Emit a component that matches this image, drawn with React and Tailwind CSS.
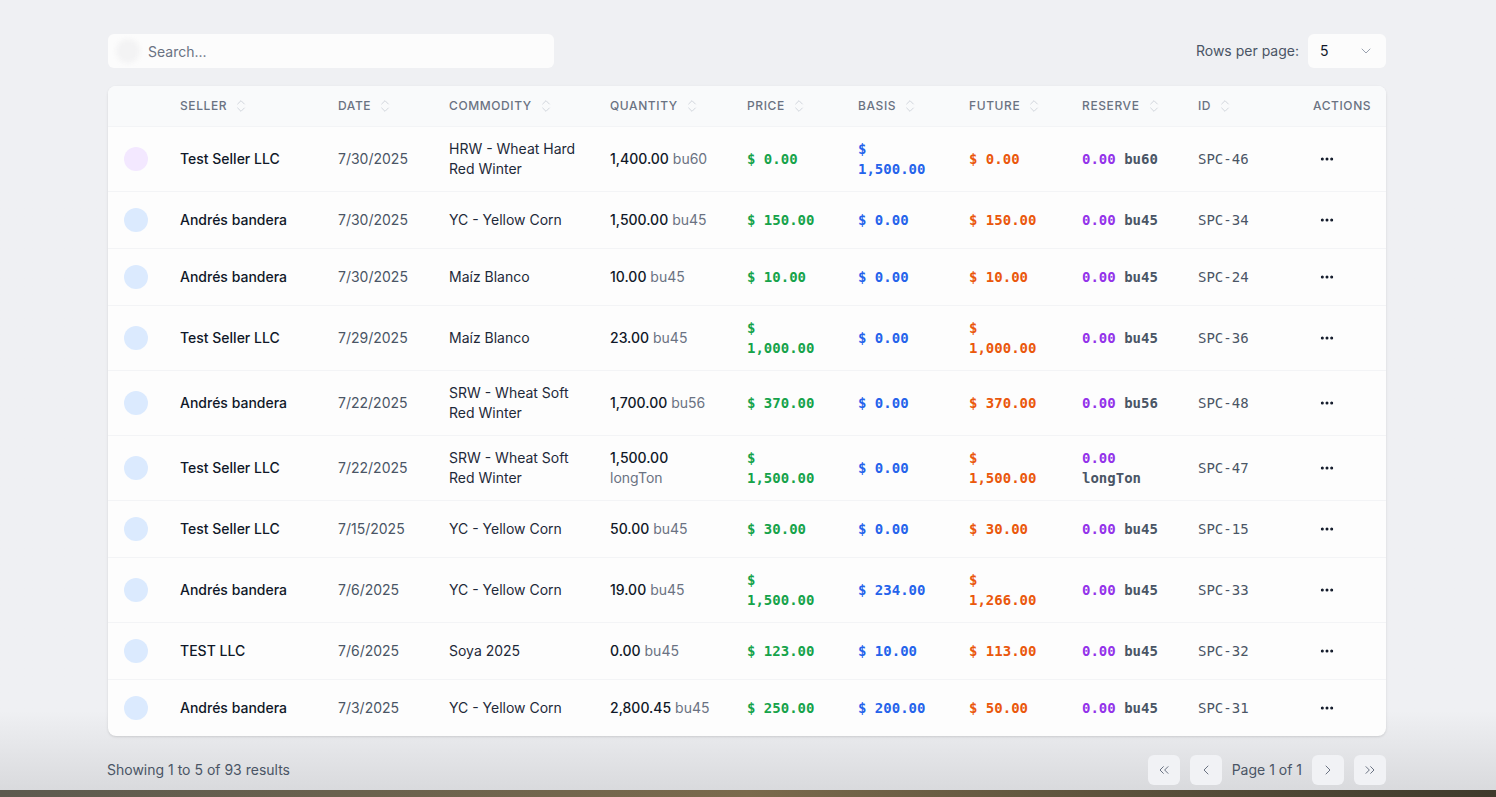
import React from 'react';
import { ChevronDown, ChevronsUpDown, ChevronLeft, ChevronRight, ChevronsLeft, ChevronsRight, MoreHorizontal } from 'lucide-react';

const rows = [
  { seller: 'Test Seller LLC', date: '7/30/2025', commodity: 'HRW - Wheat Hard Red Winter', qty: '1,400.00', unit: 'bu60', price: '0.00', basis: '1,500.00', future: '0.00', reserve: '0.00', id: 'SPC-46', purple: true },
  { seller: 'Andrés bandera', date: '7/30/2025', commodity: 'YC - Yellow Corn', qty: '1,500.00', unit: 'bu45', price: '150.00', basis: '0.00', future: '150.00', reserve: '0.00', id: 'SPC-34' },
  { seller: 'Andrés bandera', date: '7/30/2025', commodity: 'Maíz Blanco', qty: '10.00', unit: 'bu45', price: '10.00', basis: '0.00', future: '10.00', reserve: '0.00', id: 'SPC-24' },
  { seller: 'Test Seller LLC', date: '7/29/2025', commodity: 'Maíz Blanco', qty: '23.00', unit: 'bu45', price: '1,000.00', basis: '0.00', future: '1,000.00', reserve: '0.00', id: 'SPC-36' },
  { seller: 'Andrés bandera', date: '7/22/2025', commodity: 'SRW - Wheat Soft Red Winter', qty: '1,700.00', unit: 'bu56', price: '370.00', basis: '0.00', future: '370.00', reserve: '0.00', id: 'SPC-48' },
  { seller: 'Test Seller LLC', date: '7/22/2025', commodity: 'SRW - Wheat Soft Red Winter', qty: '1,500.00', unit: 'longTon', price: '1,500.00', basis: '0.00', future: '1,500.00', reserve: '0.00', id: 'SPC-47' },
  { seller: 'Test Seller LLC', date: '7/15/2025', commodity: 'YC - Yellow Corn', qty: '50.00', unit: 'bu45', price: '30.00', basis: '0.00', future: '30.00', reserve: '0.00', id: 'SPC-15' },
  { seller: 'Andrés bandera', date: '7/6/2025', commodity: 'YC - Yellow Corn', qty: '19.00', unit: 'bu45', price: '1,500.00', basis: '234.00', future: '1,266.00', reserve: '0.00', id: 'SPC-33' },
  { seller: 'TEST LLC', date: '7/6/2025', commodity: 'Soya 2025', qty: '0.00', unit: 'bu45', price: '123.00', basis: '10.00', future: '113.00', reserve: '0.00', id: 'SPC-32' },
  { seller: 'Andrés bandera', date: '7/3/2025', commodity: 'YC - Yellow Corn', qty: '2,800.45', unit: 'bu45', price: '250.00', basis: '200.00', future: '50.00', reserve: '0.00', id: 'SPC-31' },
];

const mono = "font-['DejaVu_Sans_Mono',monospace]";

const headers = [
  { label: '', w: 'w-[56px]' },
  { label: 'Seller', w: 'w-[158px]' },
  { label: 'Date', w: 'w-[111px]' },
  { label: 'Commodity', w: 'w-[161px]' },
  { label: 'Quantity', w: 'w-[137px]' },
  { label: 'Price', w: 'w-[111px]' },
  { label: 'Basis', w: 'w-[111px]' },
  { label: 'Future', w: 'w-[113px]' },
  { label: 'Reserve', w: 'w-[116px]' },
  { label: 'ID', w: 'w-[115px]' },
  { label: 'Actions', w: 'w-[89px]', noSort: true },
];

const PageBtn = ({ children }) => (
  <button className="w-8 h-[30px] rounded-md bg-[#f1f2f5] flex items-center justify-center text-gray-500">
    {children}
  </button>
);

export default function App() {
  return (
    <div className="min-h-screen flex flex-col bg-[#eff0f3] font-['Inter',sans-serif]">
      <div className="flex-1 bg-gradient-to-b from-[#eff0f3] from-90% to-[#d9dadd]">
        <div className="ml-[108px] w-[1278px] pt-[34px]">
          <div className="flex items-center justify-between">
            <div className="w-[446px] h-[34px] bg-[#fcfcfc] rounded-md flex items-center px-2">
              <div className="w-6 h-6 rounded-full bg-[#f3f3f4] blur-[2px]"></div>
              <span className="ml-2 mt-0.5 text-sm text-gray-500">Search...</span>
            </div>
            <div className="flex items-center gap-[9px]">
              <span className="text-sm text-gray-600">Rows per page:</span>
              <div className="w-[78px] h-[34px] bg-[#fcfcfc] rounded-md flex items-center justify-between pl-3 pr-3">
                <span className="text-sm text-gray-900">5</span>
                <ChevronDown className="w-4 h-4 text-gray-400" strokeWidth={1.5} />
              </div>
            </div>
          </div>

          <div className="mt-[18px] bg-[#fdfdfd] rounded-lg shadow-sm overflow-hidden">
            <table className="w-full table-fixed border-collapse">
              <thead>
                <tr className="bg-[#f9fafb] border-b border-gray-100 h-[40px]">
                  {headers.map((h, i) => (
                    <th key={i} className={`${h.w} px-4 text-left align-middle`}>
                      {h.label && (
                        <div className="flex items-center text-xs font-medium uppercase tracking-wider text-gray-500">
                          {h.label}
                          {!h.noSort && <ChevronsUpDown className="ml-1.5 w-4 h-4 text-gray-300" strokeWidth={1.5} />}
                        </div>
                      )}
                    </th>
                  ))}
                </tr>
              </thead>
              <tbody>
                {rows.map((r, i) => (
                  <tr key={i} className={i < rows.length - 1 ? 'border-b border-gray-100' : ''}>
                    <td className="px-4 py-3 align-middle">
                      <div className="h-8 flex items-center">
                        <div className={`w-6 h-6 rounded-full ${r.purple ? 'bg-[#f3e8ff]' : 'bg-[#dbeafe]'}`}></div>
                      </div>
                    </td>
                    <td className="px-4 py-3 text-sm font-medium text-gray-900">{r.seller}</td>
                    <td className="px-4 py-3 text-sm text-gray-600">{r.date}</td>
                    <td className="px-4 py-3 text-sm text-gray-800 leading-5">{r.commodity}</td>
                    <td className="px-4 py-3 text-sm leading-5">
                      <span className="font-medium text-gray-900">{r.qty}</span>{' '}
                      <span className="text-gray-500">{r.unit}</span>
                    </td>
                    <td className={`px-4 py-3 text-sm leading-5 font-bold text-[#16a34a] ${mono}`}>$ {r.price}</td>
                    <td className={`px-4 py-3 text-sm leading-5 font-bold text-[#2563eb] ${mono}`}>$ {r.basis}</td>
                    <td className={`px-4 py-3 text-sm leading-5 font-bold text-[#ea580c] ${mono}`}>$ {r.future}</td>
                    <td className={`px-4 py-3 text-sm leading-5 font-bold ${mono}`}>
                      <span className="text-[#9333ea]">{r.reserve}</span>{' '}
                      <span className="text-gray-600">{r.unit}</span>
                    </td>
                    <td className={`px-4 py-3 text-sm text-gray-600 ${mono}`}>{r.id}</td>
                    <td className="px-4 py-3">
                      <button className="px-1.5 flex items-center text-gray-900">
                        <MoreHorizontal className="w-4 h-4" strokeWidth={2.5} />
                      </button>
                    </td>
                  </tr>
                ))}
              </tbody>
            </table>
          </div>

          <div className="mt-[19px] flex items-center justify-between">
            <span className="text-sm text-gray-600 -ml-px">Showing 1 to 5 of 93 results</span>
            <div className="flex items-center gap-2.5">
              <PageBtn><ChevronsLeft className="w-4 h-4" strokeWidth={1.5} /></PageBtn>
              <PageBtn><ChevronLeft className="w-4 h-4" strokeWidth={1.5} /></PageBtn>
              <span className="text-sm text-gray-600">Page 1 of 1</span>
              <PageBtn><ChevronRight className="w-4 h-4" strokeWidth={1.5} /></PageBtn>
              <PageBtn><ChevronsRight className="w-4 h-4" strokeWidth={1.5} /></PageBtn>
            </div>
          </div>
        </div>
      </div>
      <div className="h-[7px] bg-gradient-to-r from-[#5d5a4f] via-[#7a6a4c] to-[#3f3a2c]"></div>
    </div>
  );
}
